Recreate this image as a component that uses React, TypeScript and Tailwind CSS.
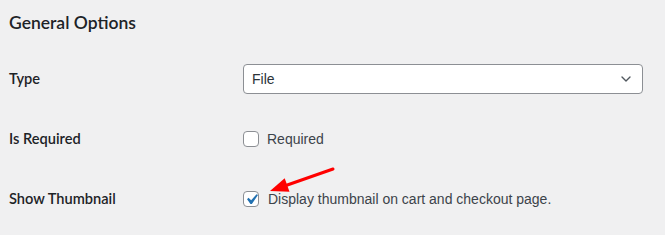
import { ChevronDown } from "lucide-react";

const font = { fontFamily: '"Liberation Sans", Arial, sans-serif' };
const headFont = { fontFamily: 'Lato, "Liberation Sans", Arial, sans-serif' };

const Checkbox = ({ checked }: { checked?: boolean }) => (
  <span className="w-4 h-4 shrink-0 rounded-[4px] border border-[#8c8f94] bg-white flex items-center justify-center overflow-visible">
    {checked && (
      <svg width="21" height="21" viewBox="0 0 20 20" className="-m-[3px] shrink-0">
        <path d="M14.83 4.89l1.34.94-5.81 8.38H9.02L5.78 9.67l1.34-1.25 2.57 2.4z" fill="#2271b1" />
      </svg>
    )}
  </span>
);

const App = () => {
  return (
    <div className="relative w-[665px] h-[235px] bg-[#f0f0f1] text-[#1d2327] pl-[9px] overflow-hidden" style={font}>
      {/* Title */}
      <div className="h-[46px] flex items-center">
        <h2 className="text-[17.5px] font-semibold" style={headFont}>General Options</h2>
      </div>

      <div className="mt-[18px] flex flex-col gap-[30px]">
        {/* Type */}
        <div className="h-[30px] flex items-center">
          <div className="w-[234px] text-[14.6px] font-semibold" style={headFont}>Type</div>
          <div className="w-[400px] h-[30px] rounded-[4px] border border-[#8c8f94] bg-white flex items-center justify-between pl-[8px] pr-[8px]">
            <span className="text-[14px] text-[#2c3338]">File</span>
            <ChevronDown size={16} strokeWidth={2} className="text-[#50575e]" />
          </div>
        </div>

        {/* Is Required */}
        <div className="h-[30px] flex items-center">
          <div className="w-[234px] text-[14.6px] font-semibold" style={headFont}>Is Required</div>
          <label className="flex items-center gap-[8px] text-[14px] text-[#3c434a]">
            <Checkbox />
            Required
          </label>
        </div>

        {/* Show Thumbnail */}
        <div className="h-[30px] flex items-center">
          <div className="w-[234px] text-[14.6px] font-semibold" style={headFont}>Show Thumbnail</div>
          <label className="flex items-center gap-[9px] text-[14px] text-[#3c434a]">
            <Checkbox checked />
            Display thumbnail on cart and checkout page.
          </label>
        </div>
      </div>

      {/* annotation arrow */}
      <svg className="absolute left-0 top-0 pointer-events-none" width="665" height="235">
        <line x1="333" y1="169" x2="283" y2="186.5" stroke="#f00" strokeWidth="3" strokeLinecap="round" />
        <polygon points="270,191 289.5,191.8 284.7,178.2" fill="#f00" />
      </svg>
    </div>
  );
};

export default App;
